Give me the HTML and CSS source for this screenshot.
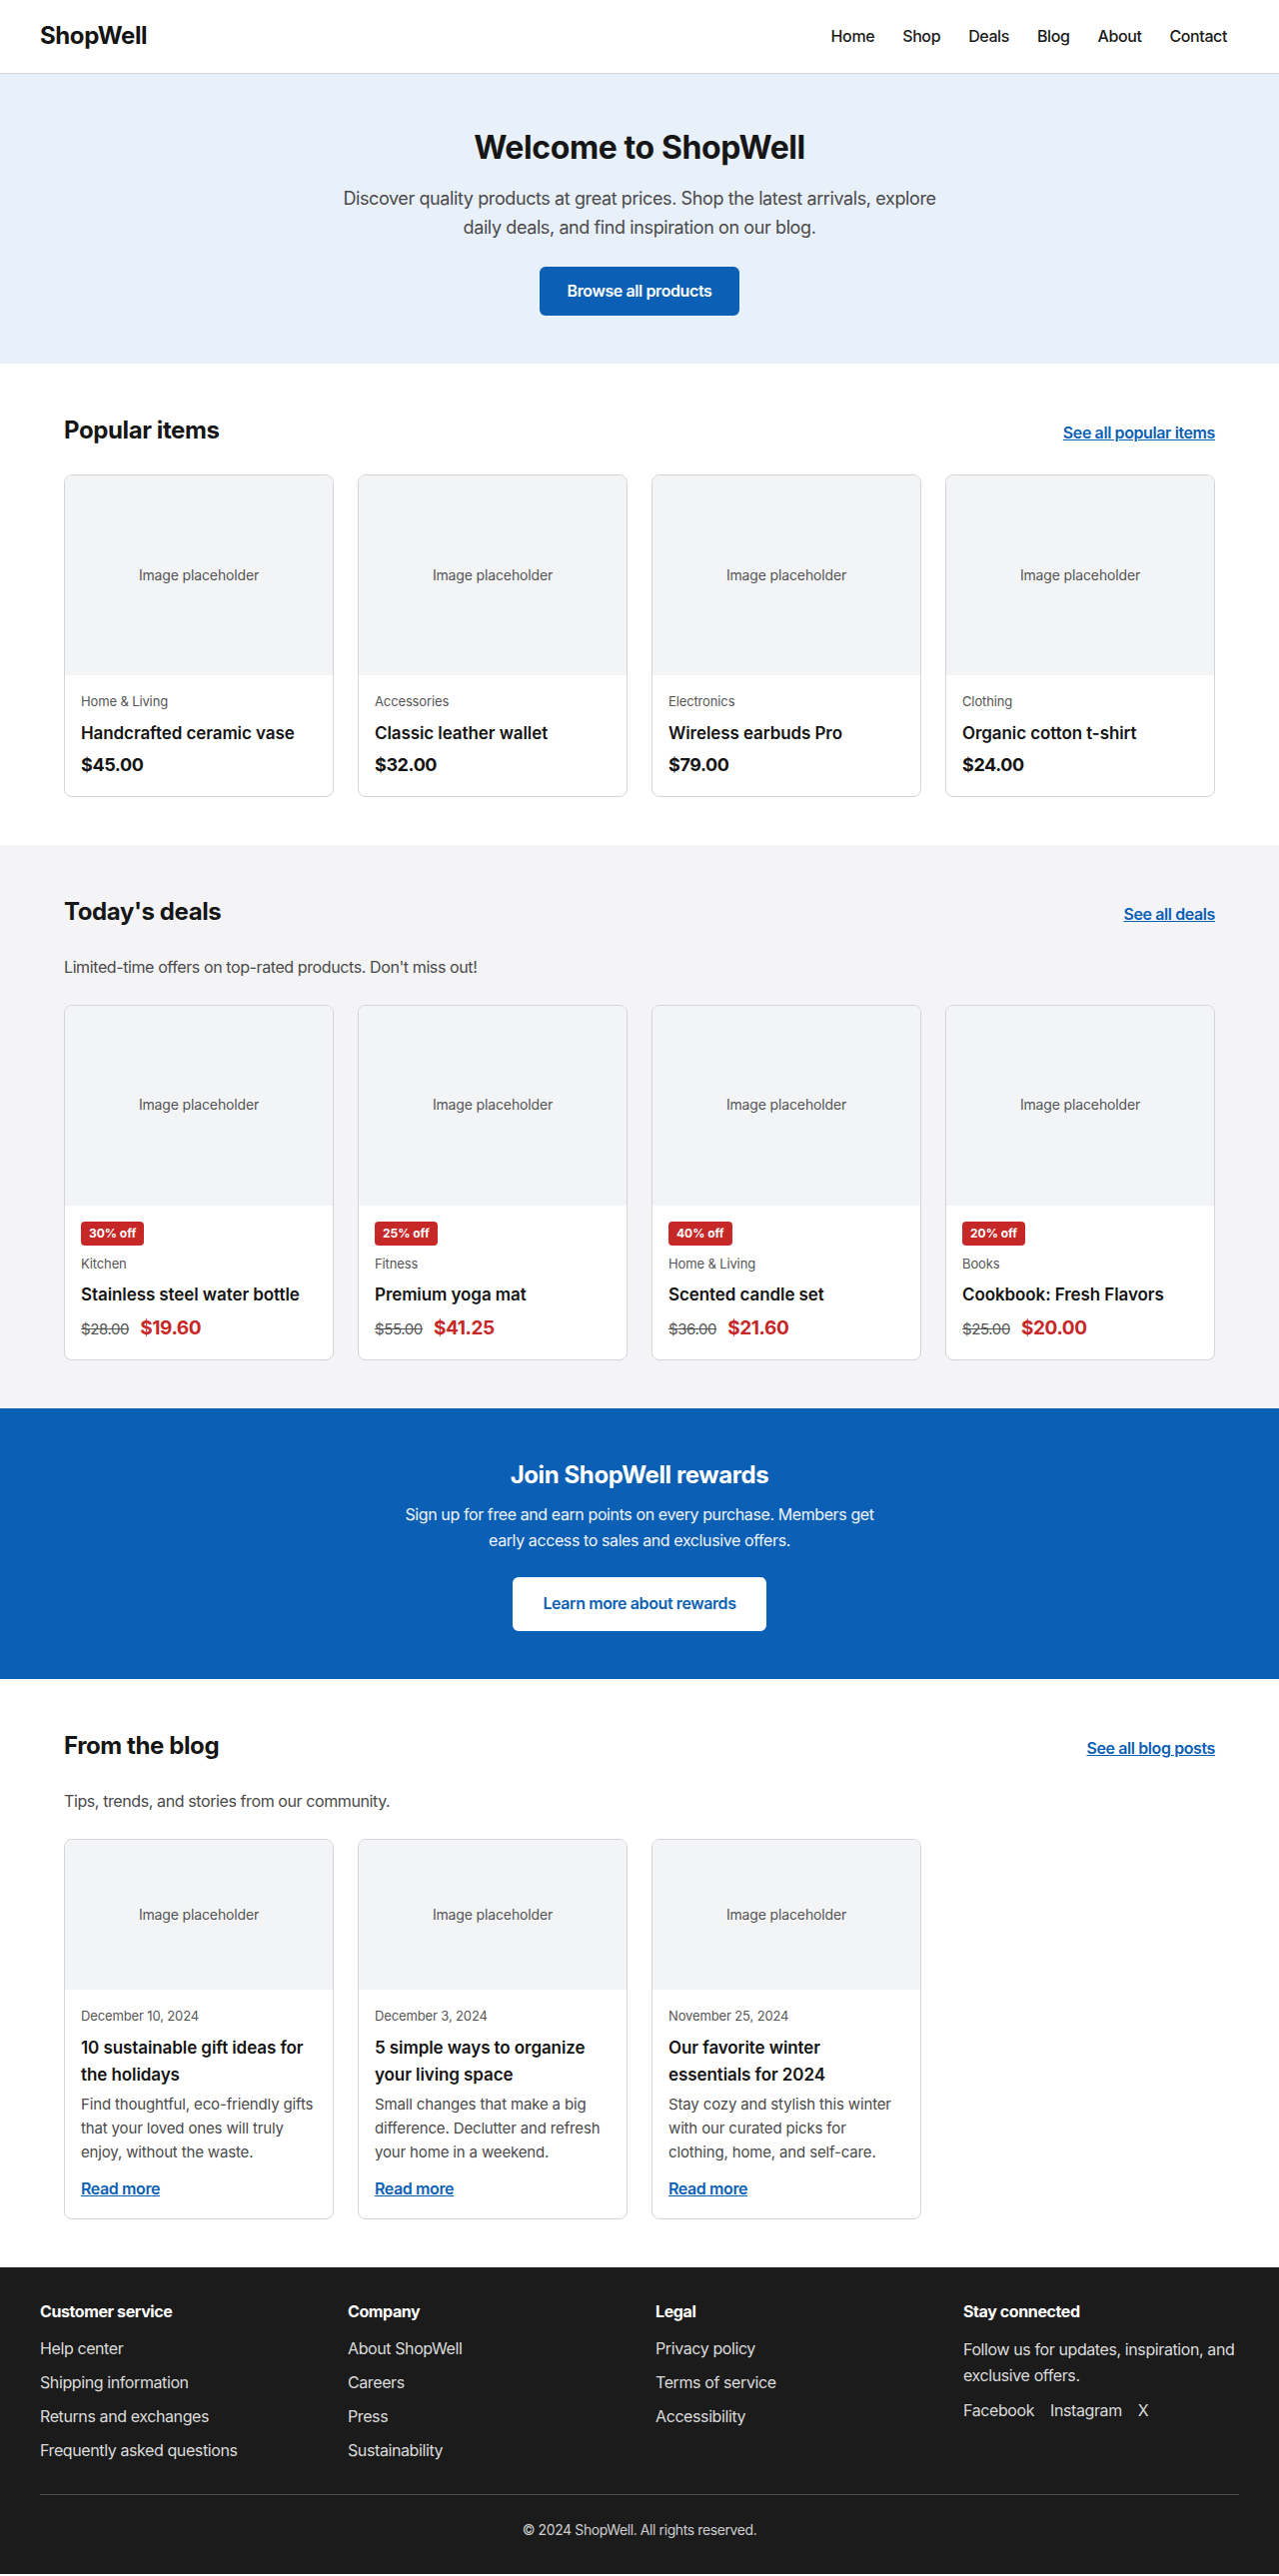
FILE: index.html
```html
<!DOCTYPE html>
<html lang="en">
<head>
    <meta charset="UTF-8">
    <meta name="viewport" content="width=device-width, initial-scale=1.0">
    <title>ShopWell</title>
    <link rel="stylesheet" href="styles.css">
</head>
<body>
    <header class="site-header">
        <div class="header-inner">
            <a href="#" class="logo">ShopWell</a>
            <nav class="main-nav">
                <a href="#">Home</a>
                <a href="#">Shop</a>
                <a href="#">Deals</a>
                <a href="#">Blog</a>
                <a href="#">About</a>
                <a href="#">Contact</a>
            </nav>
        </div>
    </header>

    <section class="hero">
        <h1>Welcome to ShopWell</h1>
        <p>Discover quality products at great prices. Shop the latest arrivals, explore daily deals, and find inspiration on our blog.</p>
        <a href="#" class="btn btn-primary">Browse all products</a>
    </section>

    <section class="section">
        <div class="container">
            <div class="section-head">
                <h2>Popular items</h2>
                <a href="#" class="see-all">See all popular items</a>
            </div>
            <div class="card-grid">
                <div class="card">
                    <div class="placeholder">Image placeholder</div>
                    <div class="card-body">
                        <div class="category">Home &amp; Living</div>
                        <h3 class="card-title">Handcrafted ceramic vase</h3>
                        <div class="price">$45.00</div>
                    </div>
                </div>
                <div class="card">
                    <div class="placeholder">Image placeholder</div>
                    <div class="card-body">
                        <div class="category">Accessories</div>
                        <h3 class="card-title">Classic leather wallet</h3>
                        <div class="price">$32.00</div>
                    </div>
                </div>
                <div class="card">
                    <div class="placeholder">Image placeholder</div>
                    <div class="card-body">
                        <div class="category">Electronics</div>
                        <h3 class="card-title">Wireless earbuds Pro</h3>
                        <div class="price">$79.00</div>
                    </div>
                </div>
                <div class="card">
                    <div class="placeholder">Image placeholder</div>
                    <div class="card-body">
                        <div class="category">Clothing</div>
                        <h3 class="card-title">Organic cotton t-shirt</h3>
                        <div class="price">$24.00</div>
                    </div>
                </div>
            </div>
        </div>
    </section>

    <section class="section section-gray">
        <div class="container">
            <div class="section-head">
                <h2>Today's deals</h2>
                <a href="#" class="see-all">See all deals</a>
            </div>
            <p class="section-sub">Limited-time offers on top-rated products. Don't miss out!</p>
            <div class="card-grid">
                <div class="card">
                    <div class="placeholder">Image placeholder</div>
                    <div class="card-body">
                        <span class="badge">30% off</span>
                        <div class="category">Kitchen</div>
                        <h3 class="card-title">Stainless steel water bottle</h3>
                        <div class="price"><s class="old-price">$28.00</s><span class="sale-price">$19.60</span></div>
                    </div>
                </div>
                <div class="card">
                    <div class="placeholder">Image placeholder</div>
                    <div class="card-body">
                        <span class="badge">25% off</span>
                        <div class="category">Fitness</div>
                        <h3 class="card-title">Premium yoga mat</h3>
                        <div class="price"><s class="old-price">$55.00</s><span class="sale-price">$41.25</span></div>
                    </div>
                </div>
                <div class="card">
                    <div class="placeholder">Image placeholder</div>
                    <div class="card-body">
                        <span class="badge">40% off</span>
                        <div class="category">Home &amp; Living</div>
                        <h3 class="card-title">Scented candle set</h3>
                        <div class="price"><s class="old-price">$36.00</s><span class="sale-price">$21.60</span></div>
                    </div>
                </div>
                <div class="card">
                    <div class="placeholder">Image placeholder</div>
                    <div class="card-body">
                        <span class="badge">20% off</span>
                        <div class="category">Books</div>
                        <h3 class="card-title">Cookbook: Fresh Flavors</h3>
                        <div class="price"><s class="old-price">$25.00</s><span class="sale-price">$20.00</span></div>
                    </div>
                </div>
            </div>
        </div>
    </section>

    <section class="rewards">
        <h2>Join ShopWell rewards</h2>
        <p>Sign up for free and earn points on every purchase. Members get early access to sales and exclusive offers.</p>
        <a href="#" class="btn btn-light">Learn more about rewards</a>
    </section>

    <section class="section">
        <div class="container">
            <div class="section-head">
                <h2>From the blog</h2>
                <a href="#" class="see-all">See all blog posts</a>
            </div>
            <p class="section-sub">Tips, trends, and stories from our community.</p>
            <div class="card-grid">
                <div class="card">
                    <div class="placeholder placeholder-short">Image placeholder</div>
                    <div class="card-body">
                        <div class="category">December 10, 2024</div>
                        <h3 class="card-title">10 sustainable gift ideas for the holidays</h3>
                        <p class="excerpt">Find thoughtful, eco-friendly gifts that your loved ones will truly enjoy, without the waste.</p>
                        <a href="#" class="read-more">Read more</a>
                    </div>
                </div>
                <div class="card">
                    <div class="placeholder placeholder-short">Image placeholder</div>
                    <div class="card-body">
                        <div class="category">December 3, 2024</div>
                        <h3 class="card-title">5 simple ways to organize your living space</h3>
                        <p class="excerpt">Small changes that make a big difference. Declutter and refresh your home in a weekend.</p>
                        <a href="#" class="read-more">Read more</a>
                    </div>
                </div>
                <div class="card">
                    <div class="placeholder placeholder-short">Image placeholder</div>
                    <div class="card-body">
                        <div class="category">November 25, 2024</div>
                        <h3 class="card-title">Our favorite winter essentials for 2024</h3>
                        <p class="excerpt">Stay cozy and stylish this winter with our curated picks for clothing, home, and self-care.</p>
                        <a href="#" class="read-more">Read more</a>
                    </div>
                </div>
            </div>
        </div>
    </section>

    <footer class="site-footer">
        <div class="footer-inner">
            <div class="footer-cols">
                <div class="footer-col">
                    <h4>Customer service</h4>
                    <ul>
                        <li><a href="#">Help center</a></li>
                        <li><a href="#">Shipping information</a></li>
                        <li><a href="#">Returns and exchanges</a></li>
                        <li><a href="#">Frequently asked questions</a></li>
                    </ul>
                </div>
                <div class="footer-col">
                    <h4>Company</h4>
                    <ul>
                        <li><a href="#">About ShopWell</a></li>
                        <li><a href="#">Careers</a></li>
                        <li><a href="#">Press</a></li>
                        <li><a href="#">Sustainability</a></li>
                    </ul>
                </div>
                <div class="footer-col">
                    <h4>Legal</h4>
                    <ul>
                        <li><a href="#">Privacy policy</a></li>
                        <li><a href="#">Terms of service</a></li>
                        <li><a href="#">Accessibility</a></li>
                    </ul>
                </div>
                <div class="footer-col">
                    <h4>Stay connected</h4>
                    <p>Follow us for updates, inspiration, and exclusive offers.</p>
                    <div class="social">
                        <a href="#">Facebook</a>
                        <a href="#">Instagram</a>
                        <a href="#">X</a>
                    </div>
                </div>
            </div>
            <div class="footer-bottom">
                &copy; 2024 ShopWell. All rights reserved.
            </div>
        </div>
    </footer>
</body>
</html>
```

FILE: styles.css
```css
* {
    box-sizing: border-box;
}
body {
    font-family: Inter, "Noto Sans", Arial, sans-serif;
    margin: 0;
    padding: 0;
    background: #fff;
    color: #1a1a1a;
    line-height: 1.6;
    letter-spacing: -0.025em;
}
a {
    color: inherit;
    text-decoration: none;
}

/* header */
.site-header {
    border-bottom: 1px solid #d6d6d6;
    background: #fff;
}
.header-inner {
    max-width: 1200px;
    margin: 0 auto;
    height: 73px;
    display: flex;
    align-items: center;
    justify-content: space-between;
}
.logo {
    font-size: 24px;
    font-weight: 700;
    color: #141414;
}
.main-nav {
    display: flex;
    gap: 4px;
}
.main-nav a {
    padding: 8px 12px;
    font-size: 16px;
    font-weight: 500;
    color: #1a1a1a;
}

/* hero */
.hero {
    background: #e8f0fa;
    text-align: center;
    padding: 48px 24px;
}
.hero h1 {
    font-size: 32px;
    font-weight: 700;
    margin: 0 0 12px;
    color: #161616;
}
.hero p {
    font-size: 18px;
    color: #4a4a4a;
    max-width: 600px;
    margin: 0 auto 24px;
}
.btn {
    display: inline-block;
    font-size: 16px;
    font-weight: 600;
    border-radius: 6px;
}
.btn-primary {
    background: #0b5fb5;
    color: #fff;
    padding: 12px 28px;
}
.btn-light {
    background: #fff;
    color: #0b5fb5;
    border: 2px solid #fff;
    padding: 12px 28px;
}

/* sections */
.section {
    padding: 48px 0;
}
.section-gray {
    background: #f4f4f6;
}
.container {
    max-width: 1200px;
    margin: 0 auto;
    padding: 0 24px;
}
.section-head {
    display: flex;
    justify-content: space-between;
    align-items: baseline;
    margin-bottom: 24px;
}
.section-head h2 {
    font-size: 24px;
    font-weight: 700;
    margin: 0;
    color: #161616;
}
.see-all {
    font-size: 16px;
    font-weight: 600;
    color: #0b5fb5;
    text-decoration: underline;
}
.section-sub {
    font-size: 16px;
    color: #4a4a4a;
    margin: 0 0 24px;
}

/* cards */
.card-grid {
    display: grid;
    grid-template-columns: repeat(4, 1fr);
    gap: 24px;
}
.card {
    background: #fff;
    border: 1px solid #d4d4d8;
    border-radius: 8px;
    overflow: hidden;
}
.placeholder {
    height: 200px;
    background: #f3f4f6;
    color: #555;
    font-size: 14px;
    letter-spacing: -0.01em;
    display: flex;
    align-items: center;
    justify-content: center;
}
.placeholder-short {
    height: 150px;
}
.card-body {
    padding: 16px;
}
.category {
    font-size: 13px;
    color: #555;
    letter-spacing: -0.01em;
}
.card-title {
    font-size: 17px;
    font-weight: 600;
    margin: 8px 0 0;
    color: #141414;
    letter-spacing: -0.005em;
}
.price {
    font-size: 18px;
    font-weight: 700;
    margin-top: 4px;
    color: #141414;
}
.old-price {
    font-size: 15px;
    font-weight: 400;
    color: #555;
    margin-right: 11px;
}
.sale-price {
    color: #c62828;
    font-size: 19px;
}
.badge {
    display: inline-block;
    background: #c62828;
    color: #fff;
    font-size: 12px;
    font-weight: 700;
    line-height: 18px;
    padding: 3px 8px;
    border-radius: 4px;
    margin-bottom: 8px;
    vertical-align: top;
    letter-spacing: 0;
}
.excerpt {
    font-size: 15px;
    color: #4a4a4a;
    margin: 4px 0 0;
    letter-spacing: -0.01em;
}
.read-more {
    display: inline-block;
    margin-top: 12px;
    font-size: 16px;
    font-weight: 600;
    color: #0b5fb5;
    text-decoration: underline;
}

/* rewards banner */
.rewards {
    background: #0b5fb5;
    color: #fff;
    text-align: center;
    padding: 48px 24px;
}
.rewards h2 {
    font-size: 24px;
    font-weight: 700;
    margin: 0 0 8px;
}
.rewards p {
    font-size: 16px;
    max-width: 480px;
    margin: 0 auto 24px;
    color: #f0f5fb;
}

/* footer */
.site-footer {
    background: #1b1b1b;
    color: #dcdcdc;
    padding: 32px 0;
}
.footer-inner {
    max-width: 1200px;
    margin: 0 auto;
}
.footer-cols {
    display: grid;
    grid-template-columns: repeat(4, 1fr);
    gap: 32px;
    margin-bottom: 32px;
}
.footer-col h4 {
    font-size: 16px;
    font-weight: 700;
    color: #fff;
    margin: 0 0 12px;
}
.footer-col ul {
    list-style: none;
    margin: 0;
    padding: 0;
    display: flex;
    flex-direction: column;
    gap: 10px;
}
.footer-col li {
    font-size: 16px;
    line-height: 24px;
}
.footer-col p {
    font-size: 16px;
    line-height: 26px;
    margin: 0 0 10px;
}
.social {
    display: flex;
    gap: 16px;
    font-size: 16px;
}
.footer-bottom {
    border-top: 1px solid #4a4a4a;
    padding-top: 24px;
    text-align: center;
    font-size: 14px;
    color: #cfcfcf;
}
```
